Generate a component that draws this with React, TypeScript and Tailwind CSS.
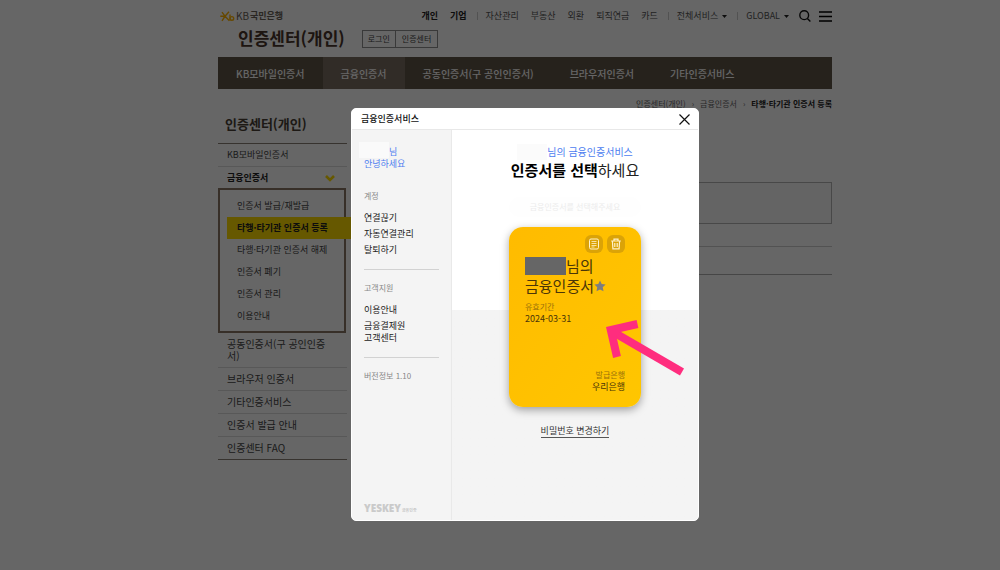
import type { ReactNode } from 'react'

const globalMenu = ['자산관리', '부동산', '외환', '퇴직연금', '카드']

const mainTabs = [
  { label: 'KB모바일인증서', active: false },
  { label: '금융인증서', active: true },
  { label: '공동인증서(구 공인인증서)', active: false },
  { label: '브라우저인증서', active: false },
  { label: '기타인증서비스', active: false },
]

const subMenu = [
  { label: '인증서 발급/재발급', active: false },
  { label: '타행·타기관 인증서 등록', active: true },
  { label: '타행·타기관 인증서 해제', active: false },
  { label: '인증서 폐기', active: false },
  { label: '인증서 관리', active: false },
  { label: '이용안내', active: false },
]

const lowerMenu = ['공동인증서(구 공인인증서)', '브라우저 인증서', '기타인증서비스', '인증서 발급 안내', '인증센터 FAQ']

function Logo() {
  return (
    <a href="#" className="flex items-center gap-px text-[10px] leading-4 text-[#6a6258]">
      <svg width="15" height="11" viewBox="0 0 15 11" fill="none" stroke="#ffb400" strokeWidth="1.4">
        <path d="M0.3 5.2H5.5M2 1.2L5 5.2L2 9.8M9 0.8L5 5.2L9.4 9.8" />
        <path d="M10 3.6V9.4" />
        <circle cx="11.9" cy="7.4" r="1.8" />
      </svg>
      <span>KB</span>
      <span className="text-[9px] font-bold">국민은행</span>
    </a>
  )
}

function Caret() {
  return (
    <svg width="5" height="3" viewBox="0 0 5 3" fill="#222">
      <path d="M0 0H5L2.5 3Z" />
    </svg>
  )
}

function Divider() {
  return <span className="h-2 w-px bg-[#ccc]" />
}

function Header() {
  return (
    <header>
      <div className="flex h-8 items-center justify-between pl-[2px]">
        <Logo />
        <nav className="flex items-center text-[9px] leading-4 text-[#555]">
          <a href="#" className="mr-3 font-bold text-[#222]">개인</a>
          <a href="#" className="mr-[10px] font-bold text-[#222]">기업</a>
          <Divider />
          <div className="mr-[10px] ml-2 flex gap-3">
            {globalMenu.map((label) => (
              <a key={label} href="#">{label}</a>
            ))}
          </div>
          <Divider />
          <button className="mr-[10px] ml-2 flex items-center gap-1">전체서비스 <Caret /></button>
          <Divider />
          <button className="mr-[10px] ml-2 flex items-center gap-1">GLOBAL <Caret /></button>
          <button aria-label="검색" className="mr-2">
            <svg width="12" height="12" viewBox="0 0 12 12" fill="none" stroke="#111" strokeWidth="1.4">
              <circle cx="5.2" cy="5.2" r="4.4" />
              <path d="M8.4 8.4L11.4 11.4" />
            </svg>
          </button>
          <button aria-label="전체메뉴">
            <svg width="13" height="11" viewBox="0 0 13 11" stroke="#000" strokeWidth="1.6">
              <path d="M0 1H13M0 5.5H13M0 10H13" />
            </svg>
          </button>
        </nav>
      </div>
      <div className="flex h-[25px] items-start pl-5">
        <h1 className="-mt-1 text-[17px] leading-5 font-bold text-[#4a362c]">인증센터(개인)</h1>
        <div className="-mt-[2px] ml-[17px] flex h-[18px] divide-x divide-[#8f8f8f] border border-[#8f8f8f] text-[8px] leading-4 text-[#444]">
          <button className="px-[5px]">로그인</button>
          <button className="px-[6px]">인증센터</button>
        </div>
      </div>
      <nav className="flex h-8 bg-[#5f5648] text-[10px] font-medium text-white">
        {mainTabs.map((tab) => (
          <a
            key={tab.label}
            href="#"
            className={tab.active ? 'flex items-center bg-[#7b6e62] px-[18px]' : 'flex items-center px-[18px]'}
          >
            {tab.label}
          </a>
        ))}
      </nav>
    </header>
  )
}

function SideMenu() {
  return (
    <aside className="w-[129px] shrink-0 text-[9px] leading-3 text-[#444]">
      <h2 className="mb-[9px] pl-[7px] text-[13px] leading-5 font-bold text-[#4a3f36]">인증센터(개인)</h2>
      <div className="border-t border-[#8b7f75]">
        <a href="#" className="block border-b border-[#ddd] py-[5px] pl-[9px]">KB모바일인증서</a>
        <a href="#" className="flex items-center justify-between pt-[5px] pr-3 pb-1 pl-[9px] font-bold text-[#222]">
          금융인증서
          <svg width="10" height="7" viewBox="0 0 10 7" fill="none" stroke="#ffdc00" strokeWidth="2.6">
            <path d="M1 1L5 5L9 1" />
          </svg>
        </a>
      </div>
      <ul className="mr-px border-2 border-[#8b7565] pt-[5px] pb-1 pl-[7px]">
        {subMenu.map((item) => (
          <li
            key={item.label}
            className={item.active ? '-mr-3 bg-[#ffdc00] py-[5px] pl-[10px] font-bold text-[#222]' : 'py-[5px] pl-[10px]'}
          >
            <a href="#" className="block whitespace-nowrap">{item.label}</a>
          </li>
        ))}
      </ul>
      <ul className="divide-y divide-[#ddd] border-b border-[#8b7f75] text-[10px]">
        {lowerMenu.map((label) => (
          <li key={label} className="py-[5px] pr-5 pl-[9px]">
            <a href="#" className="block break-all">{label}</a>
          </li>
        ))}
      </ul>
    </aside>
  )
}

function ServiceGroup({ title, children }: { title: string; children: ReactNode }) {
  return (
    <section className="border-b border-[#d2d2d2] pb-[13px]">
      <h3 className="mb-[10px] text-[8px] leading-3 text-[#888]">{title}</h3>
      <ul className="flex flex-col gap-1 text-[9px] leading-3 text-[#222]">{children}</ul>
    </section>
  )
}

function Certificate() {
  return (
    <article className="relative flex h-[180px] w-[132px] flex-col rounded-[14px] bg-linear-to-br from-[#ffbb00] to-[#ffc600] px-4 pt-2 pb-[14px] text-[#4a3508] shadow-[0_3px_9px_rgba(0,0,0,0.35)]">
      <div className="flex justify-end gap-1">
        <button aria-label="상세" className="flex size-[18px] items-center justify-center rounded-md bg-[#dba307]">
          <svg width="12" height="12" viewBox="0 0 12 12" fill="none" stroke="#fff2cc" strokeWidth="1">
            <rect x="1.5" y="1" width="9" height="10" rx="1.5" />
            <path d="M3.5 3.5H8.5M3.5 5.5H8.5M3.5 7.5H8.5M3.5 9H6.5" strokeWidth="0.8" />
          </svg>
        </button>
        <button aria-label="삭제" className="flex size-[18px] items-center justify-center rounded-md bg-[#dba307]">
          <svg width="12" height="12" viewBox="0 0 12 12" fill="none" stroke="#fff2cc" strokeWidth="1.2">
            <path d="M1.2 3H10.8M4 3V1.2H8V3M2.4 3L2.9 10.8H9.1L9.6 3M4.8 5V9M7.2 5V9" />
          </svg>
        </button>
      </div>
      <h3 className="mt-[3px] text-[15px] leading-5">
        <span className="flex items-center">
          <span className="h-[18px] w-[41px] bg-[#666]" />
          님의
        </span>
        <span className="flex items-center whitespace-nowrap">
          금융인증서
          <svg width="12" height="12" viewBox="0 0 24 24" fill="#7d7d80" className="shrink-0">
            <path d="M12 1L15.4 8.2L23.2 9.2L17.5 14.6L19 22.6L12 18.8L5 22.6L6.5 14.6L0.8 9.2L8.6 8.2Z" />
          </svg>
        </span>
      </h3>
      <p className="mt-[5px] text-[8px] leading-3 text-[#98700a]">유효기간</p>
      <p className="text-[9px] leading-3">2024-03-31</p>
      <div className="mt-auto text-right">
        <p className="text-[8px] leading-3 text-[#98700a]">발급은행</p>
        <p className="text-[9px] leading-3">우리은행</p>
      </div>
      <svg width="80" height="58" viewBox="0 0 80 58" fill="none" stroke="#ff2d7e" strokeWidth="8" className="absolute top-[92px] left-[96px]">
        <path d="M9 13.5L77 53" />
        <path d="M12 38L5.8 11L32.5 5" />
      </svg>
    </article>
  )
}

function ServiceDialog() {
  return (
    <div role="dialog" aria-label="금융인증서비스" className="flex h-[413px] w-[348px] flex-col overflow-hidden rounded-[5px] border border-white bg-white">
      <div className="flex h-[21px] shrink-0 items-center justify-between border-b border-[#e8e8e8] pr-2 pl-[9px]">
        <h2 className="text-[9px] leading-3 font-medium text-[#111]">금융인증서비스</h2>
        <button aria-label="닫기">
          <svg width="11" height="11" viewBox="0 0 11 11" stroke="#111" strokeWidth="1.2">
            <path d="M0.5 0.5L10.5 10.5M10.5 0.5L0.5 10.5" />
          </svg>
        </button>
      </div>
      <div className="flex grow">
        <div className="flex w-[100px] shrink-0 flex-col border-r border-[#e9e9e9] bg-[#f4f4f4] pt-[13px] pr-3 pb-[6px] pl-3">
          <p className="mb-5 text-[9px] leading-3 text-[#4c7df0]">
            <span className="-ml-[5px] flex items-end">
              <span className="-mt-px h-4 w-[30px] bg-[#fafafa]" />
              <span>님</span>
            </span>
            안녕하세요
          </p>
          <ServiceGroup title="계정">
            <li><a href="#">연결끊기</a></li>
            <li><a href="#">자동연결관리</a></li>
            <li><a href="#">탈퇴하기</a></li>
          </ServiceGroup>
          <div className="h-3" />
          <ServiceGroup title="고객지원">
            <li><a href="#">이용안내</a></li>
            <li><a href="#">금융결제원<br />고객센터</a></li>
          </ServiceGroup>
          <p className="mt-3 text-[8px] leading-3 text-[#888]">버전정보 1.10</p>
          <p className="mt-auto flex items-baseline gap-px font-[Open_Sans,sans-serif] text-[10px] leading-3 font-extrabold text-[#cacaca]">
            YESKEY
            <span className="font-['Noto_Sans_CJK_KR',sans-serif] text-[4px] leading-1 font-bold">금융인증</span>
          </p>
        </div>
        <div className="flex grow flex-col items-center bg-linear-to-b from-white from-[180px] to-[#f4f4f4] to-[180px] pt-[14px]">
          <p className="flex items-center text-[10px] leading-3 text-[#4c7df0]">
            <span className="h-4 w-[30px] bg-[#fbfbfb]" />
            님의 금융인증서비스
          </p>
          <h1 className="text-[15px] leading-5 text-[#222]"><b className="font-bold text-black">인증서를 선택</b>하세요</h1>
          <p className="mt-[17px] mb-[10px] w-[132px] rounded-full bg-[#fefefe] py-1 text-center text-[8px] leading-3 text-[#ececec]">금융인증서를 선택해주세요</p>
          <Certificate />
          <a href="#" className="mt-[18px] border-b border-[#555] text-[9px] leading-3 text-[#333]">비밀번호 변경하기</a>
        </div>
      </div>
    </div>
  )
}

export default function App() {
  return (
    <div lang="ko" className="relative min-h-screen bg-white pl-[50px] font-['Noto_Sans_CJK_KR',sans-serif]">
      <div className="mx-auto max-w-[614px]">
        <Header />
        <nav className="flex items-center justify-end gap-[6px] pt-[9px] text-[8px] leading-3 text-[#666]">
          <a href="#">인증센터(개인)</a>
          <span>›</span>
          <a href="#">금융인증서</a>
          <span>›</span>
          <b className="text-[#222]">타행·타기관 인증서 등록</b>
        </nav>
        <div className="flex gap-[18px] pt-1">
          <SideMenu />
          <main className="grow pt-[68px]">
            <div className="h-[42px] border border-[#b5b5b5] bg-[#fafafa]" />
            <div className="h-[23px] border-b border-[#ccc]" />
            <div className="h-7 border-b border-[#b0b0b0]" />
          </main>
        </div>
      </div>
      <div className="absolute inset-0 flex items-start justify-center bg-black/60 pt-[108px] pl-[50px]">
        <ServiceDialog />
      </div>
    </div>
  )
}
